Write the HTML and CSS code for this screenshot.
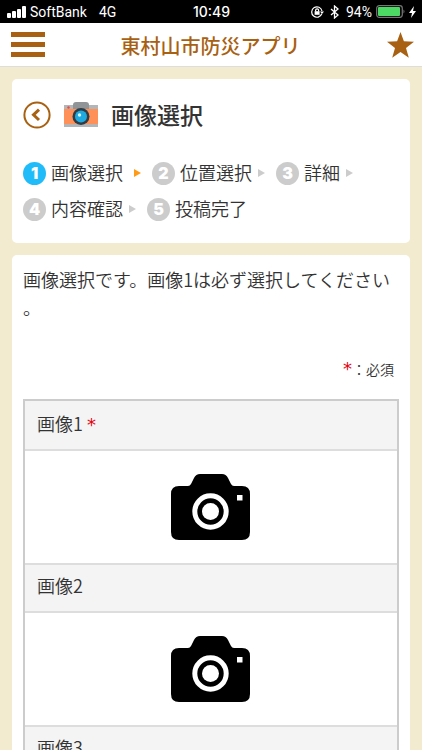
FILE: index.html
```html
<!DOCTYPE html>
<html lang="ja">
<head>
<meta charset="utf-8">
<meta name="viewport" content="width=device-width, initial-scale=1">
<title>東村山市防災アプリ</title>
<link rel="stylesheet" href="styles.css">
</head>
<body>
<svg class="defs" aria-hidden="true">
  <symbol id="camera" viewBox="0 0 80 66">
    <path d="M8 12h9q2 0 3-2l3-6q2-4 6-4h22q4 0 6 4l3 6q1 2 3 2h8q8 0 8 8v38q0 8-8 8H8q-8 0-8-8V20q0-8 8-8z"/>
    <circle cx="39.500" cy="37.500" r="15.700" fill="#000" stroke="#fff" stroke-width="5"/>
    <circle cx="39.500" cy="37.500" r="8.500" fill="#fff"/>
    <path d="M66 21h5.500v5.500H66z" fill="#fff"/>
  </symbol>
</svg>

<div class="status">
  <div class="status-side">
    <svg width="20" height="12" viewBox="0 0 20 12" fill="#fff" aria-hidden="true">
      <rect x="0" y="7" width="4" height="5" rx="1"/><rect x="5" y="5" width="4" height="7" rx="1"/><rect x="10" y="3" width="4" height="9" rx="1"/><rect x="15" y="0" width="4" height="12" rx="1"/>
    </svg>
    <span class="carrier">SoftBank</span>
    <span>4G</span>
  </div>
  <time class="clock">10:49</time>
  <div class="status-side status-right">
    <svg width="13" height="12" viewBox="0 0 13 12" fill="none" stroke="#fff" stroke-width="1.200" aria-hidden="true">
      <path d="M10.800 7.800A5.200 5.200 0 1 1 11 5"/><path d="M9 5.500h4L11 8z" fill="#fff" stroke="none"/>
      <rect x="3.600" y="5.200" width="5" height="3.600" fill="#fff" stroke="none"/><path d="M4.600 5.500V4.300a1.500 1.500 0 0 1 3 0v1.200"/>
    </svg>
    <svg class="bluetooth" width="9" height="14" viewBox="0 0 9 14" fill="none" stroke="#fff" stroke-width="1.300" aria-hidden="true">
      <path d="M1 4l7 6-3.500 3V1L8 4l-7 6"/>
    </svg>
    <span>94%</span>
    <svg class="battery" width="30" height="13" viewBox="0 0 30 13" aria-hidden="true">
      <rect x=".7" y=".7" width="25.600" height="11.600" rx="2.500" fill="none" stroke="#777" stroke-width="1.200"/>
      <rect x="2" y="2" width="22" height="9" rx="1" fill="#4cd964"/>
      <path d="M27.500 4.500q2 2 0 4z" fill="#777"/>
    </svg>
    <svg width="7" height="12" viewBox="0 0 7 12" fill="#fff" aria-hidden="true"><path d="M5 0L0 7h3l-1 5 5-7H4z"/></svg>
  </div>
</div>

<header class="appbar">
  <button class="icon-button" type="button" aria-label="メニュー">
    <svg width="34" height="26" viewBox="0 0 34 26" fill="#a86112"><path d="M0 0h34v5H0zM0 10h34v5H0zM0 20h34v5H0z"/></svg>
  </button>
  <div class="app-title">東村山市防災アプリ</div>
  <button class="icon-button favorite" type="button" aria-label="お気に入り">
    <svg width="27" height="26" viewBox="0 0 27 26" fill="#a86112"><path d="M13.500 0l3.400 9.300 10.100.4-8 6.200 2.800 9.800-8.300-5.700-8.300 5.700L8 15.900 0 9.700l10.100-.4z"/></svg>
  </button>
</header>

<main class="content">
  <section class="card heading-card">
    <div class="heading">
      <button class="icon-button" type="button" aria-label="戻る">
        <svg width="28" height="28" viewBox="0 0 28 28" fill="none" stroke="#a86112"><circle cx="14" cy="14" r="12.600" stroke-width="2"/><path d="M16 8.600l-5.500 5.200 5.500 5.200" stroke-width="3"/></svg>
      </button>
      <svg class="photo-icon" width="34" height="26" viewBox="0 0 34 26" aria-hidden="true">
        <path d="M0 3h34v22H0z" fill="#b3b6b8"/><path d="M0 7h34v15H0z" fill="#ff9058"/>
        <path d="M9 7V3q0-3 3-3h10q3 0 3 3v4z" fill="#909497"/><circle cx="4.500" cy="5.500" r="1.200" fill="#e84b4b"/>
        <circle cx="17" cy="14.500" r="8.500" fill="#303b43"/><circle cx="17" cy="14.500" r="6" fill="#20a9df"/><circle cx="15.500" cy="13" r="1.700" fill="#d9f5ff"/>
      </svg>
      <h1>画像選択</h1>
    </div>
    <ol class="steps">
      <li class="step current"><span class="number">1</span><span class="label">画像選択</span></li>
      <li class="step"><span class="number">2</span><span class="label">位置選択</span></li>
      <li class="step"><span class="number">3</span><span class="label">詳細</span></li>
      <li class="step"><span class="number">4</span><span class="label">内容確認</span></li>
      <li class="step"><span class="number">5</span><span class="label">投稿完了</span></li>
    </ol>
  </section>

  <section class="card form-card">
    <p class="intro">画像選択です。画像1は必ず選択してください。</p>
    <p class="legend"><span class="required">*</span>：必須</p>
    <table class="images">
      <tr><th scope="col">画像1 <span class="required">*</span></th></tr>
      <tr><td><button class="pick" type="button" aria-label="画像1を選択"><svg width="80" height="66"><use href="#camera"/></svg></button></td></tr>
      <tr><th scope="col">画像2</th></tr>
      <tr><td><button class="pick" type="button" aria-label="画像2を選択"><svg width="80" height="66"><use href="#camera"/></svg></button></td></tr>
      <tr><th scope="col">画像3</th></tr>
      <tr><td><button class="pick" type="button" aria-label="画像3を選択"><svg width="80" height="66"><use href="#camera"/></svg></button></td></tr>
    </table>
  </section>
</main>
</body>
</html>
```
FILE: styles.css
```css
* {
  box-sizing: border-box;
}

body {
  display: flex;
  flex-direction: column;
  height: 100vh;
  margin: 0;
  background: #f3ebd0;
  color: #333;
  font-family: "Noto Sans CJK JP", sans-serif;
  font-size: 18px;
  font-weight: 350;
}

button {
  padding: 0;
  border: 0;
  background: none;
  cursor: pointer;
}

svg {
  display: block;
  flex-shrink: 0;
}

.defs {
  position: absolute;
  width: 0;
  height: 0;
}

.status {
  display: grid;
  grid-template-columns: 1fr auto 1fr;
  align-items: center;
  flex-shrink: 0;
  height: 23px;
  padding: 0 6px 0 7px;
  background: #000;
  color: #fff;
  font-family: Roboto, sans-serif;
  font-size: 14px;
  font-weight: 400;
}

.status-side {
  display: flex;
  align-items: center;
}

.carrier {
  margin: 0 12px 0 3px;
}

.clock {
  font-family: Inter, sans-serif;
  font-size: 14px;
  font-weight: 500;
}

.status-right {
  justify-content: flex-end;
}

.bluetooth {
  margin: 0 7px 0 6px;
}

.battery {
  margin: 0 3px 0 4px;
}

.appbar {
  display: grid;
  grid-template-columns: 1fr auto 1fr;
  align-items: center;
  flex-shrink: 0;
  height: 44px;
  padding: 0 8px 0 11px;
  border-bottom: 1px solid #ddd;
  background: #fff;
}

.icon-button {
  justify-self: start;
}

.favorite {
  justify-self: end;
}

.app-title {
  padding-top: 2px;
  padding-right: 4px;
  color: #a86112;
  font-size: 20px;
  font-weight: 500;
  line-height: 30px;
}

.content {
  flex: 1;
  min-height: 0;
  padding: 12px;
  overflow-y: auto;
  scrollbar-width: none;
}

.card {
  padding: 0 11px;
  border-radius: 5px;
  background: #fff;
}

.heading-card {
  margin-bottom: 12px;
  padding-top: 16px;
  padding-bottom: 16px;
}

.heading {
  display: flex;
  align-items: center;
  height: 40px;
}

.photo-icon {
  margin: 0 13px;
}

h1 {
  margin: 0;
  padding-bottom: 3px;
  font-size: 23px;
  font-weight: 500;
  line-height: 36px;
}

.steps {
  display: flex;
  flex-wrap: wrap;
  margin: 20px 0 0;
  padding: 0;
  list-style: none;
}

.step {
  display: flex;
  align-items: center;
  height: 36px;
  margin-right: 11px;
}

.label {
  padding-bottom: 3px;
}

.step:not(:last-child)::after {
  content: "";
  margin-left: 6px;
  border: solid transparent;
  border-width: 4px 0 4px 7px;
  border-left-color: #ccc;
}

.step.current::after {
  margin-left: 11px;
  border-left-color: #ff9b16;
}

.number {
  display: flex;
  align-items: center;
  justify-content: center;
  width: 23px;
  height: 23px;
  margin-right: 5px;
  border-radius: 50%;
  background: #ccc;
  color: #fff;
  font-family: Inter, sans-serif;
  font-size: 16px;
  font-weight: 900;
}

.current .number {
  background: #20bcfa;
}

.form-card {
  padding-top: 10px;
  padding-bottom: 24px;
}

.intro {
  margin: 0;
  line-height: 28px;
  line-break: anywhere;
}

.legend {
  margin: 36px 5px 18px;
  font-size: 14px;
  line-height: 24px;
  text-align: right;
}

.required {
  color: #e60012;
  font-family: "DejaVu Sans", sans-serif;
  font-size: 18px;
  line-height: 20px;
  font-weight: 400;
}

.images {
  width: 100%;
  border: 2px solid #ccc;
  border-spacing: 0;
}

th,
td {
  padding: 0 12px;
  border-top: 2px solid #ddd;
}

th {
  height: 48px;
  padding-bottom: 6px;
  background: #f4f4f4;
  font-weight: 350;
  line-height: 28px;
  text-align: left;
}

tr:first-child th {
  border-top-color: #f4f4f4;
}

td {
  height: 114px;
}

.pick {
  display: block;
  margin: 0 auto;
}
```
